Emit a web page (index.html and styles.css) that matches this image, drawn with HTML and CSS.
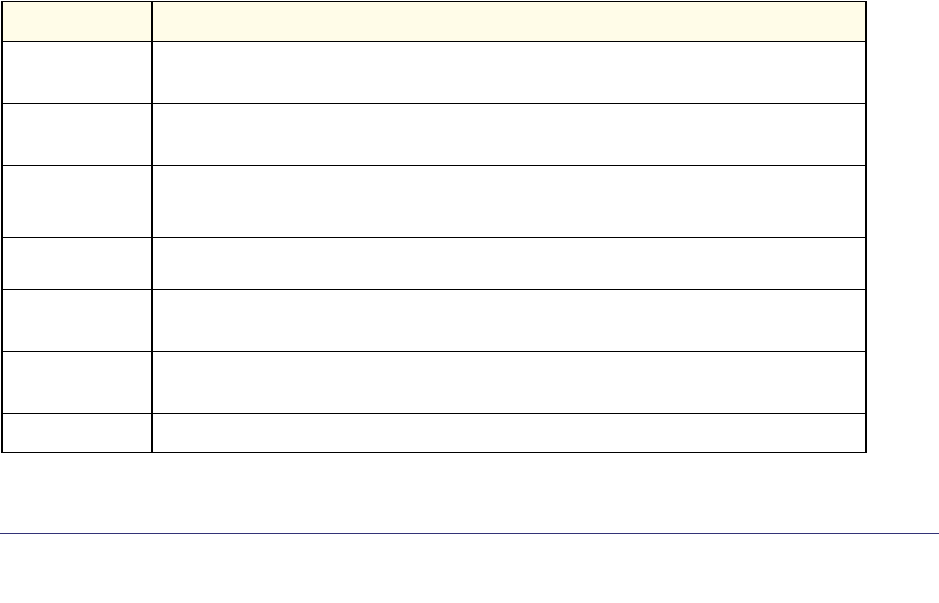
FILE: index.html
```html
<!DOCTYPE html>
<html lang="en">
<head>
<meta charset="utf-8">
<title>Table</title>
<link rel="stylesheet" href="styles.css">
</head>
<body>
<div class="doc">
  <div class="grid-table">
    <div class="row head"><div class="c1"></div><div class="c2"></div></div>
    <div class="row h61"><div class="c1"></div><div class="c2"></div></div>
    <div class="row h61"><div class="c1"></div><div class="c2"></div></div>
    <div class="row h71"><div class="c1"></div><div class="c2"></div></div>
    <div class="row h51"><div class="c1"></div><div class="c2"></div></div>
    <div class="row h61"><div class="c1"></div><div class="c2"></div></div>
    <div class="row h61"><div class="c1"></div><div class="c2"></div></div>
    <div class="row h38"><div class="c1"></div><div class="c2"></div></div>
  </div>
  <div class="rule"></div>
</div>
</body>
</html>
```

FILE: styles.css
```css
html, body {
  margin: 0;
  padding: 0;
  background: #ffffff;
  font-family: "Liberation Sans", Arial, sans-serif;
}

.doc {
  padding-top: 1px;
}

.grid-table {
  margin-left: 1px;
  width: 866px;
  box-sizing: border-box;
  border-style: solid;
  border-color: #000000;
  border-width: 1px 2px;
}

.row {
  display: flex;
  border-top: 1px solid #000000;
}

.row:first-child {
  border-top: 0;
}

.c1 {
  flex: none;
  width: 148px;
  border-right: 2px solid #000000;
}

.c2 {
  flex: 1;
}

.head {
  height: 39px;
  background: #fffce8;
}

.h61 { height: 61px; }
.h71 { height: 71px; }
.h51 { height: 51px; }
.h38 { height: 38px; }

.rule {
  margin-top: 80px;
  border-top: 1px solid #333377;
}
```
